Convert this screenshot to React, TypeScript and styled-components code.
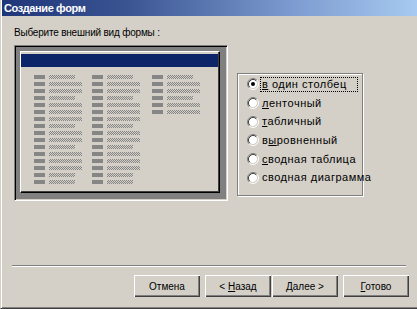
import React from "react";
import styled, { createGlobalStyle } from "styled-components";

const GlobalStyle = createGlobalStyle`
  html, body { margin: 0; padding: 0; background: #d4d0c8; }
  body { font-family: "Liberation Sans", Arial, sans-serif; }
  * { box-sizing: border-box; }
`;

const Window = styled.div`
  width: 417px;
  height: 309px;
  display: flex;
  flex-direction: column;
  background: #d4d0c8;
  border-left: 1px solid #d4d0c8;
  border-bottom: 1px solid #404040;
  box-shadow: inset 1px 0 0 #fff, inset 0 -1px 0 #808080;
  padding-left: 1px;
  overflow: hidden;
`;

const TitleBar = styled.div`
  height: 16px;
  flex-shrink: 0;
  display: flex;
  align-items: center;
  padding-left: 2px;
  background: linear-gradient(to right, #1f3579 0%, #3a5492 30%, #7d9bd0 70%, #a6caf0 100%);
  color: #fff;
  font-weight: bold;
  font-size: 11px;
  letter-spacing: -0.4px;
  white-space: nowrap;
`;

const Body = styled.div`
  flex: 1;
  display: flex;
  flex-direction: column;
  padding-left: 12px;
`;

const Prompt = styled.div`
  margin-top: 10px;
  height: 13px;
  line-height: 13px;
  font-size: 10px;
  letter-spacing: -0.2px;
  color: #000;
  white-space: nowrap;
`;

const ContentRow = styled.div`
  display: flex;
  align-items: flex-start;
  margin-top: 6px;
`;

const PreviewFrame = styled.div`
  width: 214px;
  height: 156px;
  border: 1px solid;
  border-color: #808080 #fff #fff #808080;
  box-shadow: inset 1px 1px 0 #000, inset -1px -1px 0 #d4d0c8;
  background: #808080;
  padding: 5px 7px 7px 5px;
`;

const FormMock = styled.div`
  width: 100%;
  height: 100%;
  display: flex;
  flex-direction: column;
  background: #d4d0c8;
  border: 1px solid;
  border-color: #fff #000 #000 #fff;
  box-shadow: inset -1px -1px 0 #404040;
  padding: 2px 1px 0 0;
`;

const FormHeader = styled.div`
  height: 13px;
  flex-shrink: 0;
  background: #0c2468;
`;

const FieldColumns = styled.div`
  display: flex;
  margin-top: 8px;
  padding-left: 13px;
`;

const FieldColumn = styled.div<{ $w: number }>`
  width: ${(p) => p.$w}px;
  display: flex;
  flex-direction: column;
  gap: 3px;
`;

const FieldRow = styled.div`
  display: flex;
  gap: 4px;
  height: 4px;
`;

const FieldBox = styled.div`
  width: 11px;
  height: 4px;
  background: #868686;
`;

const FieldText = styled.div<{ $w: number }>`
  width: ${(p) => p.$w}px;
  height: 4px;
  background-image: repeating-conic-gradient(#858585 0% 25%, transparent 0% 50%);
  background-size: 2px 2px;
`;

const OptionsGroup = styled.div`
  margin-left: 9px;
  margin-top: 28px;
  width: 126px;
  height: 123px;
  border: 1px solid #808080;
  box-shadow: inset 1px 1px 0 #fff, 1px 1px 0 #fff;
  padding: 1px 0 0 9px;
  display: flex;
  flex-direction: column;
`;

const OptionRow = styled.div`
  height: 18.7px;
  display: flex;
  align-items: center;
  font-size: 11px;
  color: #000;
  white-space: nowrap;
`;

const OptionLabel = styled.span<{ $focused?: boolean }>`
  margin-left: 1px;
  line-height: 13px;
  padding: 0 ${(p) => (p.$focused ? "10px" : "1px")} 0 1px;
  border: 1px dotted ${(p) => (p.$focused ? "#000" : "transparent")};
  letter-spacing: 0.5px;
`;

const Footer = styled.div`
  margin-top: auto;
  display: flex;
  flex-direction: column;
  padding-bottom: 11px;
`;

const Separator = styled.div`
  margin: 0 11px 0 -2px;
  border-top: 1px solid #808080;
  border-bottom: 1px solid #fff;
`;

const ButtonRow = styled.div`
  margin-top: 8px;
  display: flex;
  justify-content: flex-end;
  gap: 5px;
  padding-right: 8px;
`;

const ButtonPair = styled.div`
  display: flex;
  gap: 1px;
`;

const Button = styled.button`
  width: 66px;
  height: 22px;
  padding: 0;
  border: none;
  background: #d4d0c8;
  color: #000;
  font-family: "Liberation Sans", Arial, sans-serif;
  font-size: 10px;
  box-shadow: inset 1px 1px 0 #fff, inset -1px -1px 0 #404040, inset -2px -2px 0 #808080;
`;

const Radio = ({ checked }: { checked?: boolean }) => (
  <svg width="12" height="12" viewBox="0 0 12 12" style={{ flexShrink: 0 }}>
    <circle cx="6" cy="6" r="4.2" fill="#fff" />
    <path d="M2.11 9.89 A5.5 5.5 0 0 1 9.89 2.11" fill="none" stroke="#808080" strokeWidth="1" />
    <path d="M9.89 2.11 A5.5 5.5 0 0 1 2.11 9.89" fill="none" stroke="#fff" strokeWidth="1" />
    <path d="M2.82 9.18 A4.5 4.5 0 0 1 9.18 2.82" fill="none" stroke="#404040" strokeWidth="1" />
    <path d="M9.18 2.82 A4.5 4.5 0 0 1 2.82 9.18" fill="none" stroke="#d4d0c8" strokeWidth="1" />
    {checked && <circle cx="6" cy="6" r="2" fill="#000" />}
  </svg>
);

const pattern = [26, 33, 33, 26, 33, 33, 33, 26, 33, 33, 26, 33, 33, 33, 26, 26];
const columns = [
  { w: 58, rows: pattern },
  { w: 60, rows: pattern },
  { w: 60, rows: pattern.slice(0, 6) },
];

const options: { pre: string; u: string; post: string; checked?: boolean }[] = [
  { pre: "", u: "в", post: " один столбец", checked: true },
  { pre: "", u: "л", post: "енточный" },
  { pre: "", u: "т", post: "абличный" },
  { pre: "в", u: "ы", post: "ровненный" },
  { pre: "", u: "с", post: "водная таблица" },
  { pre: "сводная ", u: "д", post: "иаграмма" },
];

export default function App() {
  return (
    <>
      <GlobalStyle />
      <Window>
        <TitleBar>Создание форм</TitleBar>
        <Body>
          <Prompt>Выберите внешний вид формы :</Prompt>
          <ContentRow>
            <PreviewFrame>
              <FormMock>
                <FormHeader />
                <FieldColumns>
                  {columns.map((c, ci) => (
                    <FieldColumn key={ci} $w={c.w}>
                      {c.rows.map((w, ri) => (
                        <FieldRow key={ri}>
                          <FieldBox />
                          <FieldText $w={w} />
                        </FieldRow>
                      ))}
                    </FieldColumn>
                  ))}
                </FieldColumns>
              </FormMock>
            </PreviewFrame>
            <OptionsGroup>
              {options.map((o, i) => (
                <OptionRow key={i}>
                  <Radio checked={o.checked} />
                  <OptionLabel $focused={o.checked}>
                    {o.pre}
                    <u>{o.u}</u>
                    {o.post}
                  </OptionLabel>
                </OptionRow>
              ))}
            </OptionsGroup>
          </ContentRow>
          <Footer>
            <Separator />
            <ButtonRow>
              <Button>Отмена</Button>
              <ButtonPair>
                <Button>
                  &lt; <u>Н</u>азад
                </Button>
                <Button>
                  <u>Д</u>алее &gt;
                </Button>
              </ButtonPair>
              <Button>
                <u>Г</u>отово
              </Button>
            </ButtonRow>
          </Footer>
        </Body>
      </Window>
    </>
  );
}
